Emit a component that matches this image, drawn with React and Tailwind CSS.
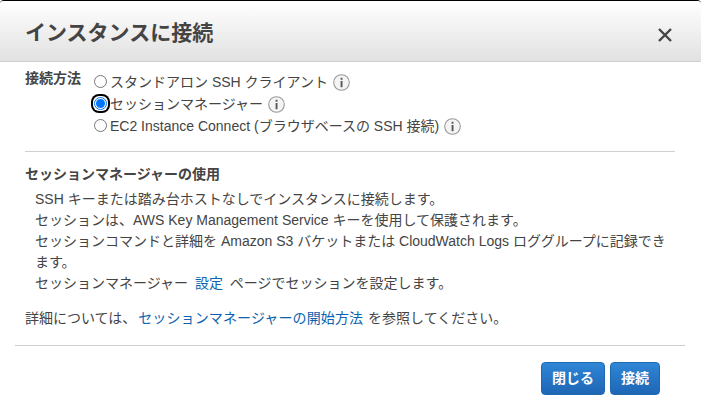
import React from 'react';

const font = { fontFamily: '"Liberation Sans", "Noto Sans CJK JP", sans-serif' };

function InfoIcon() {
  return (
    <svg width="17" height="17" viewBox="0 0 17 17" className="block shrink-0">
      <circle cx="8.5" cy="8.5" r="7.8" fill="#f4f4f4" stroke="#999" strokeWidth="1.1" />
      <rect x="7.6" y="7" width="1.9" height="6.2" fill="#555" />
      <rect x="7.6" y="3.8" width="1.9" height="1.9" fill="#555" />
    </svg>
  );
}

function RadioRow({ label, selected }) {
  return (
    <div className="flex items-center h-[22px]">
      {selected ? (
        <span className="w-[13px] h-[13px] ml-[1px] mb-[2px] rounded-[5px] bg-white ring-2 ring-black ring-offset-1 ring-offset-white flex items-center justify-center shrink-0">
          <span className="w-[13px] h-[13px] rounded-full border border-[#0075ff] flex items-center justify-center">
            <span className="w-[9px] h-[9px] rounded-full bg-[#0075ff]" />
          </span>
        </span>
      ) : (
        <span className="w-[13px] h-[13px] ml-[1px] mb-[2px] rounded-full bg-white border border-[#767676] shrink-0" />
      )}
      <span className="ml-[3px] text-[14px] text-[#444] whitespace-nowrap">{label}</span>
      <span className="ml-[5px]"><InfoIcon /></span>
    </div>
  );
}

export default function App() {
  return (
    <div style={font} className="w-[701px] h-[415px] bg-white border-t border-black overflow-hidden rounded-t-[4px]">
      <div className="h-[61px] flex items-center justify-between pt-[4px] pl-[25px] pr-[28px] bg-gradient-to-b from-white to-[#e1e1e1] border-b border-[#cfcfcf]">
        <h1 className="text-[21px] font-bold text-[#444]">インスタンスに接続</h1>
        <svg width="16" height="16" viewBox="0 0 16 16" className="mt-[4px]">
          <path d="M2 2 L14 14 M14 2 L2 14" stroke="#444" strokeWidth="2.4" />
        </svg>
      </div>

      <div className="pl-[25px] pr-[26px]">
        <div className="flex pt-[9px] pb-[14px] border-b border-[#d0d0d0]">
          <div className="w-[68px] -mt-px text-[14px] font-bold text-[#444] leading-[17px]">接続方法</div>
          <div>
            <RadioRow label="スタンドアロン SSH クライアント" />
            <RadioRow label="セッションマネージャー" selected />
            <RadioRow label="EC2 Instance Connect (ブラウザベースの SSH 接続)" />
          </div>
        </div>

        <h2 className="mt-[12px] text-[14px] font-bold text-[#444] leading-[21px]">セッションマネージャーの使用</h2>
        <div className="mt-[4px] pl-[10px] text-[14px] text-[#444] leading-[21px]">
          <p>SSH キーまたは踏み台ホストなしでインスタンスに接続します。</p>
          <p>セッションは、AWS Key Management Service キーを使用して保護されます。</p>
          <p>セッションコマンドと詳細を Amazon S3 バケットまたは CloudWatch Logs ロググループに記録できます。</p>
          <p>セッションマネージャー <a href="#" className="text-[#0b63b0] mx-[3px]">設定</a> ページでセッションを設定します。</p>
        </div>
        <p className="mt-[14px] text-[14px] text-[#444] leading-[21px]">
          詳細については、 <a href="#" className="text-[#0b63b0] -ml-[2px] mr-[1px] tracking-[0.125px]">セッションマネージャーの開始方法</a> を参照してください。
        </p>
      </div>

      <div className="ml-[15px] mr-[16px] mt-[16px] border-t border-[#d0d0d0] flex justify-end gap-[5px] pt-[16px] pr-[25px]">
        <button className="w-[64px] h-[33px] rounded-[4px] border border-[#1f69b3] bg-gradient-to-b from-[#2f86d6] to-[#1e66b5] text-white text-[14px] font-bold">閉じる</button>
        <button className="w-[50px] h-[33px] rounded-[4px] border border-[#1f69b3] bg-gradient-to-b from-[#2f86d6] to-[#1e66b5] text-white text-[14px] font-bold">接続</button>
      </div>
    </div>
  );
}
